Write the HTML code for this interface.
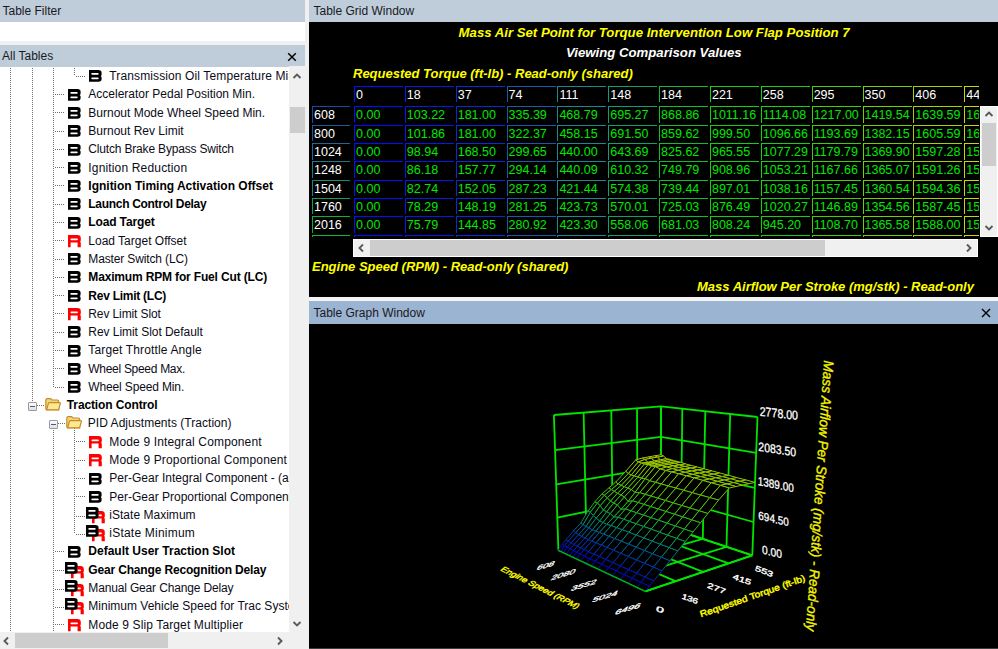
<!DOCTYPE html>
<html><head><meta charset="utf-8"><style>
*{margin:0;padding:0;box-sizing:border-box}
html,body{width:998px;height:649px;overflow:hidden;background:#f0f0f0;font-family:"Liberation Sans",sans-serif;font-size:12px;color:#000}
.abs{position:absolute}
.hdr{position:absolute;background:#bfcddb;color:#1a1a22;height:22px;line-height:23.4px;padding-left:2.5px;white-space:nowrap}
.hdr2{background:#9bb4d1}
.x{position:absolute;width:10px;height:10px}
#tree{position:absolute;left:0;top:67px;width:289px;height:565px;background:#fff;overflow:hidden}
#treein{position:absolute;left:0;top:-67px;width:289px;height:649px}
.vl{position:absolute;width:1px;background-image:linear-gradient(#6e6e6e 50%,transparent 50%);background-size:1px 2px}
.hl{position:absolute;height:1px;background-image:linear-gradient(90deg,#6e6e6e 50%,transparent 50%);background-size:2px 1px}
.ic{position:absolute;overflow:visible}
.xb{position:absolute;width:9px;height:9px;border:1px solid #9a9a9a;border-radius:1px;background:linear-gradient(#fcfcfc,#e0e0e0)}
.xb i{position:absolute;left:1.5px;top:3px;width:4.5px;height:1.2px;background:#3a5ab0}
.tt{position:absolute;white-space:nowrap;line-height:18.28px;height:18.28px;color:#0c0c18}
.tt.b{font-weight:bold;color:#000}
.sb{position:absolute;background:#f0f0f0}
.thumb{position:absolute;background:#cdcdcd}
.black{position:absolute;background:#000;overflow:hidden}
.ttl{position:absolute;font-weight:bold;font-style:italic;font-size:13px;white-space:nowrap;color:#ffff00;line-height:16px}
.gc{position:absolute;height:16.5px;width:49px;border-left:1.3px solid;border-top:1.3px solid;font-size:12.5px;line-height:16.2px;padding-left:1px;white-space:nowrap;overflow:hidden}
.gh{color:#fff}
.rl{color:#fff;width:38px}
.gd{color:#00e800}
</style></head><body>
<!-- left panel -->
<div class="hdr" style="left:0;top:0;width:305px">Table Filter</div>
<div class="abs" style="left:0;top:22px;width:305px;height:19px;background:#fff"></div>
<div class="hdr" style="left:0;top:45px;width:305px;height:22px;line-height:23.4px;padding-left:2px">All Tables</div>
<svg class="x" style="left:287px;top:51.5px" viewBox="0 0 10 10"><path d="M1.2 1.2L8.8 8.8M8.8 1.2L1.2 8.8" stroke="#000" stroke-width="1.5"/></svg>
<div id="tree"><div id="treein">
<div class="vl" style="left:10.0px;top:66px;height:566px"></div>
<div class="vl" style="left:31.5px;top:66px;height:334.84000000000003px"></div>
<div class="vl" style="left:52.5px;top:66px;height:321.06px"></div>
<div class="vl" style="left:52.5px;top:428.12000000000006px;height:203.87999999999994px"></div>
<div class="vl" style="left:73.5px;top:66px;height:10.299999999999997px"></div>
<div class="vl" style="left:73.5px;top:428.12000000000006px;height:105.1799999999999px"></div>
<div class="hl" style="left:76px;top:75.8px;width:10px"></div>
<svg class="ic" style="left:89px;top:70.39999999999999px" width="13" height="12" viewBox="0 0 13 12"><path d="M0 0H9.4Q12.6 0 12.6 2.8V4.4Q12.6 5.4 11.6 5.9Q12.6 6.4 12.6 7.4V9Q12.6 11.8 9.4 11.8H0Z" fill="#000"/><rect x="2.3" y="3.1" width="7.4" height="1.7" rx="0.8" fill="#fff"/><rect x="2.3" y="7.6" width="7.4" height="1.7" rx="0.8" fill="#fff"/></svg>
<div class="tt" style="left:109.3px;top:67.16px;letter-spacing:0.12px">Transmission Oil Temperature Min.</div>
<div class="hl" style="left:55px;top:94.08px;width:10px"></div>
<svg class="ic" style="left:68px;top:88.67999999999999px" width="13" height="12" viewBox="0 0 13 12"><path d="M0 0H9.4Q12.6 0 12.6 2.8V4.4Q12.6 5.4 11.6 5.9Q12.6 6.4 12.6 7.4V9Q12.6 11.8 9.4 11.8H0Z" fill="#000"/><rect x="2.3" y="3.1" width="7.4" height="1.7" rx="0.8" fill="#fff"/><rect x="2.3" y="7.6" width="7.4" height="1.7" rx="0.8" fill="#fff"/></svg>
<div class="tt" style="left:88.3px;top:85.44px">Accelerator Pedal Position Min.</div>
<div class="hl" style="left:55px;top:112.36px;width:10px"></div>
<svg class="ic" style="left:68px;top:106.96px" width="13" height="12" viewBox="0 0 13 12"><path d="M0 0H9.4Q12.6 0 12.6 2.8V4.4Q12.6 5.4 11.6 5.9Q12.6 6.4 12.6 7.4V9Q12.6 11.8 9.4 11.8H0Z" fill="#000"/><rect x="2.3" y="3.1" width="7.4" height="1.7" rx="0.8" fill="#fff"/><rect x="2.3" y="7.6" width="7.4" height="1.7" rx="0.8" fill="#fff"/></svg>
<div class="tt" style="left:88.3px;top:103.72px">Burnout Mode Wheel Speed Min.</div>
<div class="hl" style="left:55px;top:130.64px;width:10px"></div>
<svg class="ic" style="left:68px;top:125.23999999999998px" width="13" height="12" viewBox="0 0 13 12"><path d="M0 0H9.4Q12.6 0 12.6 2.8V4.4Q12.6 5.4 11.6 5.9Q12.6 6.4 12.6 7.4V9Q12.6 11.8 9.4 11.8H0Z" fill="#000"/><rect x="2.3" y="3.1" width="7.4" height="1.7" rx="0.8" fill="#fff"/><rect x="2.3" y="7.6" width="7.4" height="1.7" rx="0.8" fill="#fff"/></svg>
<div class="tt" style="left:88.3px;top:121.99999999999999px">Burnout Rev Limit</div>
<div class="hl" style="left:55px;top:148.92000000000002px;width:10px"></div>
<svg class="ic" style="left:68px;top:143.52px" width="13" height="12" viewBox="0 0 13 12"><path d="M0 0H9.4Q12.6 0 12.6 2.8V4.4Q12.6 5.4 11.6 5.9Q12.6 6.4 12.6 7.4V9Q12.6 11.8 9.4 11.8H0Z" fill="#000"/><rect x="2.3" y="3.1" width="7.4" height="1.7" rx="0.8" fill="#fff"/><rect x="2.3" y="7.6" width="7.4" height="1.7" rx="0.8" fill="#fff"/></svg>
<div class="tt" style="left:88.3px;top:140.28000000000003px;letter-spacing:-0.175px">Clutch Brake Bypass Switch</div>
<div class="hl" style="left:55px;top:167.2px;width:10px"></div>
<svg class="ic" style="left:68px;top:161.79999999999998px" width="13" height="12" viewBox="0 0 13 12"><path d="M0 0H9.4Q12.6 0 12.6 2.8V4.4Q12.6 5.4 11.6 5.9Q12.6 6.4 12.6 7.4V9Q12.6 11.8 9.4 11.8H0Z" fill="#000"/><rect x="2.3" y="3.1" width="7.4" height="1.7" rx="0.8" fill="#fff"/><rect x="2.3" y="7.6" width="7.4" height="1.7" rx="0.8" fill="#fff"/></svg>
<div class="tt" style="left:88.3px;top:158.56px;letter-spacing:0.163px">Ignition Reduction</div>
<div class="hl" style="left:55px;top:185.48000000000002px;width:10px"></div>
<svg class="ic" style="left:68px;top:180.08px" width="13" height="12" viewBox="0 0 13 12"><path d="M0 0H9.4Q12.6 0 12.6 2.8V4.4Q12.6 5.4 11.6 5.9Q12.6 6.4 12.6 7.4V9Q12.6 11.8 9.4 11.8H0Z" fill="#000"/><rect x="2.3" y="3.1" width="7.4" height="1.7" rx="0.8" fill="#fff"/><rect x="2.3" y="7.6" width="7.4" height="1.7" rx="0.8" fill="#fff"/></svg>
<div class="tt b" style="left:88.3px;top:176.84000000000003px">Ignition Timing Activation Offset</div>
<div class="hl" style="left:55px;top:203.76px;width:10px"></div>
<svg class="ic" style="left:68px;top:198.35999999999999px" width="13" height="12" viewBox="0 0 13 12"><path d="M0 0H9.4Q12.6 0 12.6 2.8V4.4Q12.6 5.4 11.6 5.9Q12.6 6.4 12.6 7.4V9Q12.6 11.8 9.4 11.8H0Z" fill="#000"/><rect x="2.3" y="3.1" width="7.4" height="1.7" rx="0.8" fill="#fff"/><rect x="2.3" y="7.6" width="7.4" height="1.7" rx="0.8" fill="#fff"/></svg>
<div class="tt b" style="left:88.3px;top:195.12px;letter-spacing:-0.301px">Launch Control Delay</div>
<div class="hl" style="left:55px;top:222.04000000000002px;width:10px"></div>
<svg class="ic" style="left:68px;top:216.64000000000001px" width="13" height="12" viewBox="0 0 13 12"><path d="M0 0H9.4Q12.6 0 12.6 2.8V4.4Q12.6 5.4 11.6 5.9Q12.6 6.4 12.6 7.4V9Q12.6 11.8 9.4 11.8H0Z" fill="#000"/><rect x="2.3" y="3.1" width="7.4" height="1.7" rx="0.8" fill="#fff"/><rect x="2.3" y="7.6" width="7.4" height="1.7" rx="0.8" fill="#fff"/></svg>
<div class="tt b" style="left:88.3px;top:213.40000000000003px;letter-spacing:-0.135px">Load Target</div>
<div class="hl" style="left:55px;top:240.32px;width:10px"></div>
<svg class="ic" style="left:68px;top:234.92px" width="13" height="13" viewBox="0 0 13 13"><path d="M0 0H9.4Q12.8 0 12.8 3.2V5.2Q12.8 6.4 12 6.8Q12.8 7.2 12.8 8.2V12.2H9.6V7.6H2.6V12.2H0Z" fill="#f00"/><rect x="2.5" y="3.4" width="7.4" height="1.8" rx="0.8" fill="#fff"/></svg>
<div class="tt" style="left:88.3px;top:231.68px">Load Target Offset</div>
<div class="hl" style="left:55px;top:258.6px;width:10px"></div>
<svg class="ic" style="left:68px;top:253.20000000000002px" width="13" height="12" viewBox="0 0 13 12"><path d="M0 0H9.4Q12.6 0 12.6 2.8V4.4Q12.6 5.4 11.6 5.9Q12.6 6.4 12.6 7.4V9Q12.6 11.8 9.4 11.8H0Z" fill="#000"/><rect x="2.3" y="3.1" width="7.4" height="1.7" rx="0.8" fill="#fff"/><rect x="2.3" y="7.6" width="7.4" height="1.7" rx="0.8" fill="#fff"/></svg>
<div class="tt" style="left:88.3px;top:249.96000000000004px;letter-spacing:-0.14px">Master Switch (LC)</div>
<div class="hl" style="left:55px;top:276.88px;width:10px"></div>
<svg class="ic" style="left:68px;top:271.48px" width="13" height="12" viewBox="0 0 13 12"><path d="M0 0H9.4Q12.6 0 12.6 2.8V4.4Q12.6 5.4 11.6 5.9Q12.6 6.4 12.6 7.4V9Q12.6 11.8 9.4 11.8H0Z" fill="#000"/><rect x="2.3" y="3.1" width="7.4" height="1.7" rx="0.8" fill="#fff"/><rect x="2.3" y="7.6" width="7.4" height="1.7" rx="0.8" fill="#fff"/></svg>
<div class="tt b" style="left:88.3px;top:268.24px;letter-spacing:-0.16px">Maximum RPM for Fuel Cut (LC)</div>
<div class="hl" style="left:55px;top:295.16px;width:10px"></div>
<svg class="ic" style="left:68px;top:289.76000000000005px" width="13" height="12" viewBox="0 0 13 12"><path d="M0 0H9.4Q12.6 0 12.6 2.8V4.4Q12.6 5.4 11.6 5.9Q12.6 6.4 12.6 7.4V9Q12.6 11.8 9.4 11.8H0Z" fill="#000"/><rect x="2.3" y="3.1" width="7.4" height="1.7" rx="0.8" fill="#fff"/><rect x="2.3" y="7.6" width="7.4" height="1.7" rx="0.8" fill="#fff"/></svg>
<div class="tt b" style="left:88.3px;top:286.52000000000004px;letter-spacing:-0.252px">Rev Limit (LC)</div>
<div class="hl" style="left:55px;top:313.44px;width:10px"></div>
<svg class="ic" style="left:68px;top:308.04px" width="13" height="13" viewBox="0 0 13 13"><path d="M0 0H9.4Q12.8 0 12.8 3.2V5.2Q12.8 6.4 12 6.8Q12.8 7.2 12.8 8.2V12.2H9.6V7.6H2.6V12.2H0Z" fill="#f00"/><rect x="2.5" y="3.4" width="7.4" height="1.8" rx="0.8" fill="#fff"/></svg>
<div class="tt" style="left:88.3px;top:304.8px;letter-spacing:-0.109px">Rev Limit Slot</div>
<div class="hl" style="left:55px;top:331.72px;width:10px"></div>
<svg class="ic" style="left:68px;top:326.32000000000005px" width="13" height="12" viewBox="0 0 13 12"><path d="M0 0H9.4Q12.6 0 12.6 2.8V4.4Q12.6 5.4 11.6 5.9Q12.6 6.4 12.6 7.4V9Q12.6 11.8 9.4 11.8H0Z" fill="#000"/><rect x="2.3" y="3.1" width="7.4" height="1.7" rx="0.8" fill="#fff"/><rect x="2.3" y="7.6" width="7.4" height="1.7" rx="0.8" fill="#fff"/></svg>
<div class="tt" style="left:88.3px;top:323.08000000000004px;letter-spacing:-0.044px">Rev Limit Slot Default</div>
<div class="hl" style="left:55px;top:350.00000000000006px;width:10px"></div>
<svg class="ic" style="left:68px;top:344.6000000000001px" width="13" height="12" viewBox="0 0 13 12"><path d="M0 0H9.4Q12.6 0 12.6 2.8V4.4Q12.6 5.4 11.6 5.9Q12.6 6.4 12.6 7.4V9Q12.6 11.8 9.4 11.8H0Z" fill="#000"/><rect x="2.3" y="3.1" width="7.4" height="1.7" rx="0.8" fill="#fff"/><rect x="2.3" y="7.6" width="7.4" height="1.7" rx="0.8" fill="#fff"/></svg>
<div class="tt" style="left:88.3px;top:341.36000000000007px;letter-spacing:0.143px">Target Throttle Angle</div>
<div class="hl" style="left:55px;top:368.28000000000003px;width:10px"></div>
<svg class="ic" style="left:68px;top:362.88000000000005px" width="13" height="12" viewBox="0 0 13 12"><path d="M0 0H9.4Q12.6 0 12.6 2.8V4.4Q12.6 5.4 11.6 5.9Q12.6 6.4 12.6 7.4V9Q12.6 11.8 9.4 11.8H0Z" fill="#000"/><rect x="2.3" y="3.1" width="7.4" height="1.7" rx="0.8" fill="#fff"/><rect x="2.3" y="7.6" width="7.4" height="1.7" rx="0.8" fill="#fff"/></svg>
<div class="tt" style="left:88.3px;top:359.64000000000004px;letter-spacing:-0.293px">Wheel Speed Max.</div>
<div class="hl" style="left:55px;top:386.56px;width:10px"></div>
<svg class="ic" style="left:68px;top:381.16px" width="13" height="12" viewBox="0 0 13 12"><path d="M0 0H9.4Q12.6 0 12.6 2.8V4.4Q12.6 5.4 11.6 5.9Q12.6 6.4 12.6 7.4V9Q12.6 11.8 9.4 11.8H0Z" fill="#000"/><rect x="2.3" y="3.1" width="7.4" height="1.7" rx="0.8" fill="#fff"/><rect x="2.3" y="7.6" width="7.4" height="1.7" rx="0.8" fill="#fff"/></svg>
<div class="tt" style="left:88.3px;top:377.92px;letter-spacing:-0.141px">Wheel Speed Min.</div>
<div class="xb" style="left:27.5px;top:401.54px"><i></i></div>
<div class="hl" style="left:37px;top:404.84000000000003px;width:8px"></div>
<svg class="ic" style="left:45px;top:398.14000000000004px" width="16" height="13" viewBox="0 0 16 13"><path d="M0.8 2.2Q0.8 0.6 2.4 0.6H5.6L7 2H12.4Q13.6 2 13.6 3.2V11.6H1.6Q0.8 11.6 0.8 10.8Z" fill="#f3d67a" stroke="#c48a2c" stroke-width="1.2"/><path d="M1.6 11.8L3.4 5.4Q3.7 4.6 4.6 4.6H14.6Q15.6 4.6 15.3 5.6L13.6 11.8Z" fill="#fde98f" stroke="#c48a2c" stroke-width="1.2"/></svg>
<div class="tt b" style="left:66.8px;top:396.20000000000005px;letter-spacing:-0.123px">Traction Control</div>
<div class="xb" style="left:48.5px;top:419.82000000000005px"><i></i></div>
<div class="hl" style="left:58px;top:423.12000000000006px;width:8px"></div>
<svg class="ic" style="left:66px;top:416.4200000000001px" width="16" height="13" viewBox="0 0 16 13"><path d="M0.8 2.2Q0.8 0.6 2.4 0.6H5.6L7 2H12.4Q13.6 2 13.6 3.2V11.6H1.6Q0.8 11.6 0.8 10.8Z" fill="#f3d67a" stroke="#c48a2c" stroke-width="1.2"/><path d="M1.6 11.8L3.4 5.4Q3.7 4.6 4.6 4.6H14.6Q15.6 4.6 15.3 5.6L13.6 11.8Z" fill="#fde98f" stroke="#c48a2c" stroke-width="1.2"/></svg>
<div class="tt" style="left:87.8px;top:414.4800000000001px;letter-spacing:0.031px">PID Adjustments (Traction)</div>
<div class="hl" style="left:76px;top:441.40000000000003px;width:10px"></div>
<svg class="ic" style="left:89px;top:436.00000000000006px" width="13" height="13" viewBox="0 0 13 13"><path d="M0 0H9.4Q12.8 0 12.8 3.2V5.2Q12.8 6.4 12 6.8Q12.8 7.2 12.8 8.2V12.2H9.6V7.6H2.6V12.2H0Z" fill="#f00"/><rect x="2.5" y="3.4" width="7.4" height="1.8" rx="0.8" fill="#fff"/></svg>
<div class="tt" style="left:109.3px;top:432.76000000000005px;letter-spacing:0.146px">Mode 9 Integral Component</div>
<div class="hl" style="left:76px;top:459.68px;width:10px"></div>
<svg class="ic" style="left:89px;top:454.28000000000003px" width="13" height="13" viewBox="0 0 13 13"><path d="M0 0H9.4Q12.8 0 12.8 3.2V5.2Q12.8 6.4 12 6.8Q12.8 7.2 12.8 8.2V12.2H9.6V7.6H2.6V12.2H0Z" fill="#f00"/><rect x="2.5" y="3.4" width="7.4" height="1.8" rx="0.8" fill="#fff"/></svg>
<div class="tt" style="left:109.3px;top:451.04px;letter-spacing:0.15px">Mode 9 Proportional Component</div>
<div class="hl" style="left:76px;top:477.96000000000004px;width:10px"></div>
<svg class="ic" style="left:89px;top:472.56000000000006px" width="13" height="12" viewBox="0 0 13 12"><path d="M0 0H9.4Q12.6 0 12.6 2.8V4.4Q12.6 5.4 11.6 5.9Q12.6 6.4 12.6 7.4V9Q12.6 11.8 9.4 11.8H0Z" fill="#000"/><rect x="2.3" y="3.1" width="7.4" height="1.7" rx="0.8" fill="#fff"/><rect x="2.3" y="7.6" width="7.4" height="1.7" rx="0.8" fill="#fff"/></svg>
<div class="tt" style="left:109.3px;top:469.32000000000005px">Per-Gear Integral Component - (all)</div>
<div class="hl" style="left:76px;top:496.24000000000007px;width:10px"></div>
<svg class="ic" style="left:89px;top:490.8400000000001px" width="13" height="12" viewBox="0 0 13 12"><path d="M0 0H9.4Q12.6 0 12.6 2.8V4.4Q12.6 5.4 11.6 5.9Q12.6 6.4 12.6 7.4V9Q12.6 11.8 9.4 11.8H0Z" fill="#000"/><rect x="2.3" y="3.1" width="7.4" height="1.7" rx="0.8" fill="#fff"/><rect x="2.3" y="7.6" width="7.4" height="1.7" rx="0.8" fill="#fff"/></svg>
<div class="tt" style="left:109.3px;top:487.6000000000001px">Per-Gear Proportional Component - (all)</div>
<div class="hl" style="left:76px;top:515.52px;width:10px"></div>
<svg class="ic" style="left:91.5px;top:511.02px" width="13" height="13" viewBox="0 0 13 13"><path d="M0 0H9.4Q12.8 0 12.8 3.2V5.2Q12.8 6.4 12 6.8Q12.8 7.2 12.8 8.2V12.2H9.6V7.6H2.6V12.2H0Z" fill="#f00"/><rect x="2.5" y="3.4" width="7.4" height="1.8" rx="0.8" fill="#fff"/></svg><svg class="ic" style="left:86px;top:506.82px" width="13" height="12" viewBox="0 0 13 12"><path d="M0 0H9.4Q12.6 0 12.6 2.8V4.4Q12.6 5.4 11.6 5.9Q12.6 6.4 12.6 7.4V9Q12.6 11.8 9.4 11.8H0Z" fill="#000"/><rect x="2.3" y="3.1" width="7.4" height="1.7" rx="0.8" fill="#fff"/><rect x="2.3" y="7.6" width="7.4" height="1.7" rx="0.8" fill="#fff"/></svg>
<div class="tt" style="left:109.3px;top:505.88px;letter-spacing:0.02px">iState Maximum</div>
<div class="hl" style="left:76px;top:533.8px;width:10px"></div>
<svg class="ic" style="left:91.5px;top:529.3px" width="13" height="13" viewBox="0 0 13 13"><path d="M0 0H9.4Q12.8 0 12.8 3.2V5.2Q12.8 6.4 12 6.8Q12.8 7.2 12.8 8.2V12.2H9.6V7.6H2.6V12.2H0Z" fill="#f00"/><rect x="2.5" y="3.4" width="7.4" height="1.8" rx="0.8" fill="#fff"/></svg><svg class="ic" style="left:86px;top:525.0999999999999px" width="13" height="12" viewBox="0 0 13 12"><path d="M0 0H9.4Q12.6 0 12.6 2.8V4.4Q12.6 5.4 11.6 5.9Q12.6 6.4 12.6 7.4V9Q12.6 11.8 9.4 11.8H0Z" fill="#000"/><rect x="2.3" y="3.1" width="7.4" height="1.7" rx="0.8" fill="#fff"/><rect x="2.3" y="7.6" width="7.4" height="1.7" rx="0.8" fill="#fff"/></svg>
<div class="tt" style="left:109.3px;top:524.16px;letter-spacing:0.215px">iState Minimum</div>
<div class="hl" style="left:55px;top:551.08px;width:10px"></div>
<svg class="ic" style="left:68px;top:545.6800000000001px" width="13" height="12" viewBox="0 0 13 12"><path d="M0 0H9.4Q12.6 0 12.6 2.8V4.4Q12.6 5.4 11.6 5.9Q12.6 6.4 12.6 7.4V9Q12.6 11.8 9.4 11.8H0Z" fill="#000"/><rect x="2.3" y="3.1" width="7.4" height="1.7" rx="0.8" fill="#fff"/><rect x="2.3" y="7.6" width="7.4" height="1.7" rx="0.8" fill="#fff"/></svg>
<div class="tt b" style="left:88.3px;top:542.44px">Default User Traction Slot</div>
<div class="hl" style="left:55px;top:570.36px;width:10px"></div>
<svg class="ic" style="left:70.5px;top:565.86px" width="13" height="13" viewBox="0 0 13 13"><path d="M0 0H9.4Q12.8 0 12.8 3.2V5.2Q12.8 6.4 12 6.8Q12.8 7.2 12.8 8.2V12.2H9.6V7.6H2.6V12.2H0Z" fill="#f00"/><rect x="2.5" y="3.4" width="7.4" height="1.8" rx="0.8" fill="#fff"/></svg><svg class="ic" style="left:65px;top:561.66px" width="13" height="12" viewBox="0 0 13 12"><path d="M0 0H9.4Q12.6 0 12.6 2.8V4.4Q12.6 5.4 11.6 5.9Q12.6 6.4 12.6 7.4V9Q12.6 11.8 9.4 11.8H0Z" fill="#000"/><rect x="2.3" y="3.1" width="7.4" height="1.7" rx="0.8" fill="#fff"/><rect x="2.3" y="7.6" width="7.4" height="1.7" rx="0.8" fill="#fff"/></svg>
<div class="tt b" style="left:88.3px;top:560.72px;letter-spacing:-0.162px">Gear Change Recognition Delay</div>
<div class="hl" style="left:55px;top:588.64px;width:10px"></div>
<svg class="ic" style="left:70.5px;top:584.14px" width="13" height="13" viewBox="0 0 13 13"><path d="M0 0H9.4Q12.8 0 12.8 3.2V5.2Q12.8 6.4 12 6.8Q12.8 7.2 12.8 8.2V12.2H9.6V7.6H2.6V12.2H0Z" fill="#f00"/><rect x="2.5" y="3.4" width="7.4" height="1.8" rx="0.8" fill="#fff"/></svg><svg class="ic" style="left:65px;top:579.9399999999999px" width="13" height="12" viewBox="0 0 13 12"><path d="M0 0H9.4Q12.6 0 12.6 2.8V4.4Q12.6 5.4 11.6 5.9Q12.6 6.4 12.6 7.4V9Q12.6 11.8 9.4 11.8H0Z" fill="#000"/><rect x="2.3" y="3.1" width="7.4" height="1.7" rx="0.8" fill="#fff"/><rect x="2.3" y="7.6" width="7.4" height="1.7" rx="0.8" fill="#fff"/></svg>
<div class="tt" style="left:88.3px;top:579.0px;letter-spacing:-0.156px">Manual Gear Change Delay</div>
<div class="hl" style="left:55px;top:606.92px;width:10px"></div>
<svg class="ic" style="left:70.5px;top:602.42px" width="13" height="13" viewBox="0 0 13 13"><path d="M0 0H9.4Q12.8 0 12.8 3.2V5.2Q12.8 6.4 12 6.8Q12.8 7.2 12.8 8.2V12.2H9.6V7.6H2.6V12.2H0Z" fill="#f00"/><rect x="2.5" y="3.4" width="7.4" height="1.8" rx="0.8" fill="#fff"/></svg><svg class="ic" style="left:65px;top:598.2199999999999px" width="13" height="12" viewBox="0 0 13 12"><path d="M0 0H9.4Q12.6 0 12.6 2.8V4.4Q12.6 5.4 11.6 5.9Q12.6 6.4 12.6 7.4V9Q12.6 11.8 9.4 11.8H0Z" fill="#000"/><rect x="2.3" y="3.1" width="7.4" height="1.7" rx="0.8" fill="#fff"/><rect x="2.3" y="7.6" width="7.4" height="1.7" rx="0.8" fill="#fff"/></svg>
<div class="tt" style="left:88.3px;top:597.28px">Minimum Vehicle Speed for Trac System</div>
<div class="hl" style="left:55px;top:624.2px;width:10px"></div>
<svg class="ic" style="left:68px;top:618.8000000000001px" width="13" height="13" viewBox="0 0 13 13"><path d="M0 0H9.4Q12.8 0 12.8 3.2V5.2Q12.8 6.4 12 6.8Q12.8 7.2 12.8 8.2V12.2H9.6V7.6H2.6V12.2H0Z" fill="#f00"/><rect x="2.5" y="3.4" width="7.4" height="1.8" rx="0.8" fill="#fff"/></svg>
<div class="tt" style="left:88.3px;top:615.5600000000001px;letter-spacing:0.124px">Mode 9 Slip Target Multiplier</div>
</div></div>
<!-- left vscroll -->
<div class="sb" style="left:289px;top:66px;width:16px;height:566px"></div>
<div class="thumb" style="left:290px;top:107px;width:15px;height:26px"></div>
<svg class="abs" style="left:292px;top:72px" width="10" height="8" viewBox="0 0 10 8"><path d="M1.5 6L5 2.5L8.5 6" fill="none" stroke="#5a5a5a" stroke-width="1.9"/></svg>
<svg class="abs" style="left:292px;top:619.7px" width="10" height="8" viewBox="0 0 10 8"><path d="M1.5 2L5 5.5L8.5 2" fill="none" stroke="#5a5a5a" stroke-width="1.9"/></svg>
<!-- left hscroll -->
<div class="sb" style="left:0;top:632px;width:289px;height:17px"></div>
<div class="thumb" style="left:15px;top:633px;width:153px;height:15px"></div>
<svg class="abs" style="left:2px;top:636px" width="8" height="10" viewBox="0 0 8 10"><path d="M6 1.5L2.5 5L6 8.5" fill="none" stroke="#5a5a5a" stroke-width="1.9"/></svg>
<svg class="abs" style="left:276px;top:636px" width="8" height="10" viewBox="0 0 8 10"><path d="M2 1.5L5.5 5L2 8.5" fill="none" stroke="#5a5a5a" stroke-width="1.9"/></svg>

<!-- right: grid window -->
<div class="hdr" style="left:309px;top:0;width:689px;padding-left:4.5px">Table Grid Window</div>
<div class="black" style="left:309px;top:22px;width:689px;height:275px">
 <div class="abs" style="left:-309px;top:-22px;width:998px;height:297px">
  <div class="ttl" style="left:458.6px;top:25.2px;font-size:13.2px">Mass Air Set Point for Torque Intervention Low Flap Position 7</div>
  <div class="ttl" style="left:566px;top:45px;color:#fff;font-size:13.2px">Viewing Comparison Values</div>
  <div class="ttl" style="left:353px;top:65.5px">Requested Torque (ft-lb) - Read-only (shared)</div>
  <div class="abs" style="left:0;top:0;width:979px;height:237px;overflow:hidden">
<div class="gc gh" style="left:354.0px;top:85.9px;border-color:#0010ff">0</div>
<div class="gc gh" style="left:404.85px;top:85.9px;border-color:#0818e8">18</div>
<div class="gc gh" style="left:455.7px;top:85.9px;border-color:#0a2ad4">37</div>
<div class="gc gh" style="left:506.55px;top:85.9px;border-color:#1a58a8">74</div>
<div class="gc gh" style="left:557.4px;top:85.9px;border-color:#1a8890">111</div>
<div class="gc gh" style="left:608.25px;top:85.9px;border-color:#10a070">148</div>
<div class="gc gh" style="left:659.1px;top:85.9px;border-color:#10bc34">184</div>
<div class="gc gh" style="left:709.95px;top:85.9px;border-color:#10d010">221</div>
<div class="gc gh" style="left:760.8px;top:85.9px;border-color:#18d010">258</div>
<div class="gc gh" style="left:811.6500000000001px;top:85.9px;border-color:#40d000">295</div>
<div class="gc gh" style="left:862.5px;top:85.9px;border-color:#70d000">350</div>
<div class="gc gh" style="left:913.35px;top:85.9px;border-color:#a8d000">406</div>
<div class="gc gh" style="left:964.2px;top:85.9px;border-color:#c8d800">443</div>
<div class="gc rl" style="left:312px;top:106.4px;border-color:#1a4aa8">608</div>
<div class="gc gd" style="left:354.0px;top:106.4px;border-color:#0010ff">0.00</div>
<div class="gc gd" style="left:404.85px;top:106.4px;border-color:#0818e8">103.22</div>
<div class="gc gd" style="left:455.7px;top:106.4px;border-color:#0a2ad4">181.00</div>
<div class="gc gd" style="left:506.55px;top:106.4px;border-color:#1a58a8">335.39</div>
<div class="gc gd" style="left:557.4px;top:106.4px;border-color:#1a8890">468.79</div>
<div class="gc gd" style="left:608.25px;top:106.4px;border-color:#10a070">695.27</div>
<div class="gc gd" style="left:659.1px;top:106.4px;border-color:#10bc34">868.86</div>
<div class="gc gd" style="left:709.95px;top:106.4px;border-color:#10d010">1011.16</div>
<div class="gc gd" style="left:760.8px;top:106.4px;border-color:#18d010">1114.08</div>
<div class="gc gd" style="left:811.6500000000001px;top:106.4px;border-color:#40d000">1217.00</div>
<div class="gc gd" style="left:862.5px;top:106.4px;border-color:#70d000">1419.54</div>
<div class="gc gd" style="left:913.35px;top:106.4px;border-color:#a8d000">1639.59</div>
<div class="gc gd" style="left:964.2px;top:106.4px;border-color:#c8d800">1684.00</div>
<div class="gc rl" style="left:312px;top:124.7px;border-color:#1a58a0">800</div>
<div class="gc gd" style="left:354.0px;top:124.7px;border-color:#0010ff">0.00</div>
<div class="gc gd" style="left:404.85px;top:124.7px;border-color:#0818e8">101.86</div>
<div class="gc gd" style="left:455.7px;top:124.7px;border-color:#0a2ad4">181.00</div>
<div class="gc gd" style="left:506.55px;top:124.7px;border-color:#1a58a8">322.37</div>
<div class="gc gd" style="left:557.4px;top:124.7px;border-color:#1a8890">458.15</div>
<div class="gc gd" style="left:608.25px;top:124.7px;border-color:#10a070">691.50</div>
<div class="gc gd" style="left:659.1px;top:124.7px;border-color:#10bc34">859.62</div>
<div class="gc gd" style="left:709.95px;top:124.7px;border-color:#10d010">999.50</div>
<div class="gc gd" style="left:760.8px;top:124.7px;border-color:#18d010">1096.66</div>
<div class="gc gd" style="left:811.6500000000001px;top:124.7px;border-color:#40d000">1193.69</div>
<div class="gc gd" style="left:862.5px;top:124.7px;border-color:#70d000">1382.15</div>
<div class="gc gd" style="left:913.35px;top:124.7px;border-color:#a8d000">1605.59</div>
<div class="gc gd" style="left:964.2px;top:124.7px;border-color:#c8d800">1650.00</div>
<div class="gc rl" style="left:312px;top:143.0px;border-color:#1a6898">1024</div>
<div class="gc gd" style="left:354.0px;top:143.0px;border-color:#0010ff">0.00</div>
<div class="gc gd" style="left:404.85px;top:143.0px;border-color:#0818e8">98.94</div>
<div class="gc gd" style="left:455.7px;top:143.0px;border-color:#0a2ad4">168.50</div>
<div class="gc gd" style="left:506.55px;top:143.0px;border-color:#1a58a8">299.65</div>
<div class="gc gd" style="left:557.4px;top:143.0px;border-color:#1a8890">440.00</div>
<div class="gc gd" style="left:608.25px;top:143.0px;border-color:#10a070">643.69</div>
<div class="gc gd" style="left:659.1px;top:143.0px;border-color:#10bc34">825.62</div>
<div class="gc gd" style="left:709.95px;top:143.0px;border-color:#10d010">965.55</div>
<div class="gc gd" style="left:760.8px;top:143.0px;border-color:#18d010">1077.29</div>
<div class="gc gd" style="left:811.6500000000001px;top:143.0px;border-color:#40d000">1179.79</div>
<div class="gc gd" style="left:862.5px;top:143.0px;border-color:#70d000">1369.90</div>
<div class="gc gd" style="left:913.35px;top:143.0px;border-color:#a8d000">1597.28</div>
<div class="gc gd" style="left:964.2px;top:143.0px;border-color:#c8d800">1590.00</div>
<div class="gc rl" style="left:312px;top:161.3px;border-color:#1a7a88">1248</div>
<div class="gc gd" style="left:354.0px;top:161.3px;border-color:#0010ff">0.00</div>
<div class="gc gd" style="left:404.85px;top:161.3px;border-color:#0818e8">86.18</div>
<div class="gc gd" style="left:455.7px;top:161.3px;border-color:#0a2ad4">157.77</div>
<div class="gc gd" style="left:506.55px;top:161.3px;border-color:#1a58a8">294.14</div>
<div class="gc gd" style="left:557.4px;top:161.3px;border-color:#1a8890">440.09</div>
<div class="gc gd" style="left:608.25px;top:161.3px;border-color:#10a070">610.32</div>
<div class="gc gd" style="left:659.1px;top:161.3px;border-color:#10bc34">749.79</div>
<div class="gc gd" style="left:709.95px;top:161.3px;border-color:#10d010">908.96</div>
<div class="gc gd" style="left:760.8px;top:161.3px;border-color:#18d010">1053.21</div>
<div class="gc gd" style="left:811.6500000000001px;top:161.3px;border-color:#40d000">1167.66</div>
<div class="gc gd" style="left:862.5px;top:161.3px;border-color:#70d000">1365.07</div>
<div class="gc gd" style="left:913.35px;top:161.3px;border-color:#a8d000">1591.26</div>
<div class="gc gd" style="left:964.2px;top:161.3px;border-color:#c8d800">1590.00</div>
<div class="gc rl" style="left:312px;top:179.60000000000002px;border-color:#1a8870">1504</div>
<div class="gc gd" style="left:354.0px;top:179.60000000000002px;border-color:#0010ff">0.00</div>
<div class="gc gd" style="left:404.85px;top:179.60000000000002px;border-color:#0818e8">82.74</div>
<div class="gc gd" style="left:455.7px;top:179.60000000000002px;border-color:#0a2ad4">152.05</div>
<div class="gc gd" style="left:506.55px;top:179.60000000000002px;border-color:#1a58a8">287.23</div>
<div class="gc gd" style="left:557.4px;top:179.60000000000002px;border-color:#1a8890">421.44</div>
<div class="gc gd" style="left:608.25px;top:179.60000000000002px;border-color:#10a070">574.38</div>
<div class="gc gd" style="left:659.1px;top:179.60000000000002px;border-color:#10bc34">739.44</div>
<div class="gc gd" style="left:709.95px;top:179.60000000000002px;border-color:#10d010">897.01</div>
<div class="gc gd" style="left:760.8px;top:179.60000000000002px;border-color:#18d010">1038.16</div>
<div class="gc gd" style="left:811.6500000000001px;top:179.60000000000002px;border-color:#40d000">1157.45</div>
<div class="gc gd" style="left:862.5px;top:179.60000000000002px;border-color:#70d000">1360.54</div>
<div class="gc gd" style="left:913.35px;top:179.60000000000002px;border-color:#a8d000">1594.36</div>
<div class="gc gd" style="left:964.2px;top:179.60000000000002px;border-color:#c8d800">1590.00</div>
<div class="gc rl" style="left:312px;top:197.9px;border-color:#10a050">1760</div>
<div class="gc gd" style="left:354.0px;top:197.9px;border-color:#0010ff">0.00</div>
<div class="gc gd" style="left:404.85px;top:197.9px;border-color:#0818e8">78.29</div>
<div class="gc gd" style="left:455.7px;top:197.9px;border-color:#0a2ad4">148.19</div>
<div class="gc gd" style="left:506.55px;top:197.9px;border-color:#1a58a8">281.25</div>
<div class="gc gd" style="left:557.4px;top:197.9px;border-color:#1a8890">423.73</div>
<div class="gc gd" style="left:608.25px;top:197.9px;border-color:#10a070">570.01</div>
<div class="gc gd" style="left:659.1px;top:197.9px;border-color:#10bc34">725.03</div>
<div class="gc gd" style="left:709.95px;top:197.9px;border-color:#10d010">876.49</div>
<div class="gc gd" style="left:760.8px;top:197.9px;border-color:#18d010">1020.27</div>
<div class="gc gd" style="left:811.6500000000001px;top:197.9px;border-color:#40d000">1146.89</div>
<div class="gc gd" style="left:862.5px;top:197.9px;border-color:#70d000">1354.56</div>
<div class="gc gd" style="left:913.35px;top:197.9px;border-color:#a8d000">1587.45</div>
<div class="gc gd" style="left:964.2px;top:197.9px;border-color:#c8d800">1590.00</div>
<div class="gc rl" style="left:312px;top:216.20000000000002px;border-color:#10b030">2016</div>
<div class="gc gd" style="left:354.0px;top:216.20000000000002px;border-color:#0010ff">0.00</div>
<div class="gc gd" style="left:404.85px;top:216.20000000000002px;border-color:#0818e8">75.79</div>
<div class="gc gd" style="left:455.7px;top:216.20000000000002px;border-color:#0a2ad4">144.85</div>
<div class="gc gd" style="left:506.55px;top:216.20000000000002px;border-color:#1a58a8">280.92</div>
<div class="gc gd" style="left:557.4px;top:216.20000000000002px;border-color:#1a8890">423.30</div>
<div class="gc gd" style="left:608.25px;top:216.20000000000002px;border-color:#10a070">558.06</div>
<div class="gc gd" style="left:659.1px;top:216.20000000000002px;border-color:#10bc34">681.03</div>
<div class="gc gd" style="left:709.95px;top:216.20000000000002px;border-color:#10d010">808.24</div>
<div class="gc gd" style="left:760.8px;top:216.20000000000002px;border-color:#18d010">945.20</div>
<div class="gc gd" style="left:811.6500000000001px;top:216.20000000000002px;border-color:#40d000">1108.70</div>
<div class="gc gd" style="left:862.5px;top:216.20000000000002px;border-color:#70d000">1365.58</div>
<div class="gc gd" style="left:913.35px;top:216.20000000000002px;border-color:#a8d000">1588.00</div>
<div class="gc gd" style="left:964.2px;top:216.20000000000002px;border-color:#c8d800">1590.00</div>
<div class="gc rl" style="left:312px;top:234.5px;border-color:#10b830">2272</div>
<div class="gc gd" style="left:354.0px;top:234.5px;border-color:#0010ff">0.00</div>
<div class="gc gd" style="left:404.85px;top:234.5px;border-color:#0818e8">70.00</div>
<div class="gc gd" style="left:455.7px;top:234.5px;border-color:#0a2ad4">140.00</div>
<div class="gc gd" style="left:506.55px;top:234.5px;border-color:#1a58a8">270.00</div>
<div class="gc gd" style="left:557.4px;top:234.5px;border-color:#1a8890">410.00</div>
<div class="gc gd" style="left:608.25px;top:234.5px;border-color:#10a070">540.00</div>
<div class="gc gd" style="left:659.1px;top:234.5px;border-color:#10bc34">660.00</div>
<div class="gc gd" style="left:709.95px;top:234.5px;border-color:#10d010">790.00</div>
<div class="gc gd" style="left:760.8px;top:234.5px;border-color:#18d010">930.00</div>
<div class="gc gd" style="left:811.6500000000001px;top:234.5px;border-color:#40d000">1090.00</div>
<div class="gc gd" style="left:862.5px;top:234.5px;border-color:#70d000">1350.00</div>
<div class="gc gd" style="left:913.35px;top:234.5px;border-color:#a8d000">1580.00</div>
<div class="gc gd" style="left:964.2px;top:234.5px;border-color:#c8d800">1590.00</div>
  </div>
  <!-- grid hscroll -->
  <div class="abs" style="left:353px;top:239px;width:625px;height:18px;background:#f0f0f0;border:1px solid #fff"></div>
  <div class="thumb" style="left:370px;top:240px;width:455px;height:16px"></div>
  <svg class="abs" style="left:357px;top:243px" width="8" height="10" viewBox="0 0 8 10"><path d="M6 1.5L2.5 5L6 8.5" fill="none" stroke="#5a5a5a" stroke-width="1.9"/></svg>
  <svg class="abs" style="left:965px;top:243px" width="8" height="10" viewBox="0 0 8 10"><path d="M2 1.5L5.5 5L2 8.5" fill="none" stroke="#5a5a5a" stroke-width="1.9"/></svg>
  <!-- grid vscroll -->
  <div class="abs" style="left:980px;top:106px;width:18px;height:131px;background:#f0f0f0;border:1px solid #fff"></div>
  <div class="thumb" style="left:982px;top:123px;width:14px;height:43px"></div>
  <svg class="abs" style="left:984px;top:110px" width="10" height="8" viewBox="0 0 10 8"><path d="M1.5 6L5 2.5L8.5 6" fill="none" stroke="#5a5a5a" stroke-width="1.9"/></svg>
  <svg class="abs" style="left:984px;top:224px" width="10" height="8" viewBox="0 0 10 8"><path d="M1.5 2L5 5.5L8.5 2" fill="none" stroke="#5a5a5a" stroke-width="1.9"/></svg>
  <div class="ttl" style="left:312px;top:259px">Engine Speed (RPM) - Read-only (shared)</div>
  <div class="ttl" style="left:697px;top:279px">Mass Airflow Per Stroke (mg/stk) - Read-only</div>
 </div>
</div>
<div class="abs" style="left:309px;top:297px;width:689px;height:4px;background:#f4f4f4"></div>
<!-- graph window -->
<div class="hdr hdr2" style="left:309px;top:301px;width:689px;height:23px;line-height:24.4px;padding-left:4.5px">Table Graph Window</div>
<svg class="x" style="left:981px;top:308px" viewBox="0 0 10 10"><path d="M1 1L9 9M9 1L1 9" stroke="#000" stroke-width="1.4"/></svg>
<div class="abs" style="left:309px;top:648px;width:689px;height:1px;background:#3c3c3c"></div>
<div class="black" style="left:309px;top:324px;width:689px;height:324px">
<svg style="position:absolute;left:-309px;top:-324px" width="998" height="649" viewBox="0 0 998 649">
<line x1="558.4" y1="550.3" x2="553.9" y2="415.0" stroke="#00e400" stroke-width="1.8"/>
<line x1="558.4" y1="550.3" x2="660.6" y2="524.8" stroke="#00e400" stroke-width="1.8"/>
<line x1="660.6" y1="524.8" x2="661.1" y2="406.4" stroke="#00e400" stroke-width="1.8"/>
<line x1="660.6" y1="524.8" x2="752.3" y2="555.3" stroke="#00e400" stroke-width="1.8"/>
<line x1="558.4" y1="550.3" x2="660.6" y2="524.8" stroke="#00e400" stroke-width="1.8"/>
<line x1="558.4" y1="550.3" x2="645.4" y2="591.3" stroke="#00e400" stroke-width="1.8"/>
<line x1="586.6" y1="543.2" x2="583.6" y2="412.6" stroke="#00e400" stroke-width="1.8"/>
<line x1="557.3" y1="517.7" x2="660.7" y2="496.1" stroke="#00e400" stroke-width="1.8"/>
<line x1="680.9" y1="531.6" x2="682.3" y2="408.7" stroke="#00e400" stroke-width="1.8"/>
<line x1="660.7" y1="496.1" x2="753.5" y2="522.0" stroke="#00e400" stroke-width="1.8"/>
<line x1="577.2" y1="559.2" x2="680.9" y2="531.6" stroke="#00e400" stroke-width="1.8"/>
<line x1="586.6" y1="543.2" x2="675.5" y2="581.2" stroke="#00e400" stroke-width="1.8"/>
<line x1="612.9" y1="536.7" x2="611.3" y2="410.4" stroke="#00e400" stroke-width="1.8"/>
<line x1="556.2" y1="484.3" x2="660.8" y2="466.8" stroke="#00e400" stroke-width="1.8"/>
<line x1="702.8" y1="538.9" x2="705.3" y2="411.3" stroke="#00e400" stroke-width="1.8"/>
<line x1="660.8" y1="466.8" x2="754.8" y2="487.9" stroke="#00e400" stroke-width="1.8"/>
<line x1="597.9" y1="568.9" x2="702.8" y2="538.9" stroke="#00e400" stroke-width="1.8"/>
<line x1="612.9" y1="536.7" x2="703.1" y2="571.9" stroke="#00e400" stroke-width="1.8"/>
<line x1="637.5" y1="530.5" x2="637.0" y2="408.3" stroke="#00e400" stroke-width="1.8"/>
<line x1="555.0" y1="450.1" x2="660.9" y2="436.9" stroke="#00e400" stroke-width="1.8"/>
<line x1="726.5" y1="546.8" x2="730.2" y2="414.0" stroke="#00e400" stroke-width="1.8"/>
<line x1="660.9" y1="436.9" x2="756.1" y2="452.9" stroke="#00e400" stroke-width="1.8"/>
<line x1="620.5" y1="579.6" x2="726.5" y2="546.8" stroke="#00e400" stroke-width="1.8"/>
<line x1="637.5" y1="530.5" x2="728.6" y2="563.3" stroke="#00e400" stroke-width="1.8"/>
<line x1="660.6" y1="524.8" x2="661.1" y2="406.4" stroke="#00e400" stroke-width="1.8"/>
<line x1="553.9" y1="415.0" x2="661.1" y2="406.4" stroke="#00e400" stroke-width="1.8"/>
<line x1="752.3" y1="555.3" x2="757.5" y2="417.0" stroke="#00e400" stroke-width="1.8"/>
<line x1="661.1" y1="406.4" x2="757.5" y2="417.0" stroke="#00e400" stroke-width="1.8"/>
<line x1="645.4" y1="591.3" x2="752.3" y2="555.3" stroke="#00e400" stroke-width="1.8"/>
<line x1="660.6" y1="524.8" x2="752.3" y2="555.3" stroke="#00e400" stroke-width="1.8"/>
<polygon points="654.7,455.8 657.3,457.2 663.5,456.1 660.9,454.8" fill="#000" stroke="#aac800" stroke-width="1" stroke-linejoin="round"/>
<polygon points="657.3,457.2 660.4,459.8 666.6,458.6 663.5,456.1" fill="#000" stroke="#a5c800" stroke-width="1" stroke-linejoin="round"/>
<polygon points="648.6,456.9 651.2,458.2 657.3,457.2 654.7,455.8" fill="#000" stroke="#aac800" stroke-width="1" stroke-linejoin="round"/>
<polygon points="660.4,459.8 663.5,460.6 669.7,459.4 666.6,458.6" fill="#000" stroke="#a1c800" stroke-width="1" stroke-linejoin="round"/>
<polygon points="651.2,458.2 654.3,460.9 660.4,459.8 657.3,457.2" fill="#000" stroke="#a5c800" stroke-width="1" stroke-linejoin="round"/>
<polygon points="663.5,460.6 667.1,461.5 673.3,460.4 669.7,459.4" fill="#000" stroke="#a0c800" stroke-width="1" stroke-linejoin="round"/>
<polygon points="642.2,458.1 644.8,459.5 651.2,458.2 648.6,456.9" fill="#000" stroke="#aac800" stroke-width="1" stroke-linejoin="round"/>
<polygon points="654.3,460.9 657.4,461.7 663.5,460.6 660.4,459.8" fill="#000" stroke="#a0c800" stroke-width="1" stroke-linejoin="round"/>
<polygon points="644.8,459.5 647.9,462.4 654.3,460.9 651.2,458.2" fill="#000" stroke="#a4c800" stroke-width="1" stroke-linejoin="round"/>
<polygon points="667.1,461.5 670.8,462.5 677.0,461.4 673.3,460.4" fill="#000" stroke="#9fc800" stroke-width="1" stroke-linejoin="round"/>
<polygon points="657.4,461.7 661.0,462.6 667.1,461.5 663.5,460.6" fill="#000" stroke="#9fc800" stroke-width="1" stroke-linejoin="round"/>
<polygon points="635.7,459.9 638.3,462.0 644.8,459.5 642.2,458.1" fill="#000" stroke="#a7c800" stroke-width="1" stroke-linejoin="round"/>
<polygon points="647.9,462.4 651.0,463.1 657.4,461.7 654.3,460.9" fill="#000" stroke="#9fc800" stroke-width="1" stroke-linejoin="round"/>
<polygon points="670.8,462.5 674.5,463.4 680.7,462.3 677.0,461.4" fill="#000" stroke="#9ec800" stroke-width="1" stroke-linejoin="round"/>
<polygon points="638.3,462.0 641.3,463.1 647.9,462.4 644.8,459.5" fill="#000" stroke="#a1c800" stroke-width="1" stroke-linejoin="round"/>
<polygon points="661.0,462.6 664.6,463.6 670.8,462.5 667.1,461.5" fill="#000" stroke="#9fc800" stroke-width="1" stroke-linejoin="round"/>
<polygon points="651.0,463.1 654.6,463.9 661.0,462.6 657.4,461.7" fill="#000" stroke="#9ec800" stroke-width="1" stroke-linejoin="round"/>
<polygon points="625.7,471.3 628.3,473.6 638.3,462.0 635.7,459.9" fill="#000" stroke="#8fc800" stroke-width="1" stroke-linejoin="round"/>
<polygon points="641.3,463.1 644.4,464.1 651.0,463.1 647.9,462.4" fill="#000" stroke="#9ec800" stroke-width="1" stroke-linejoin="round"/>
<polygon points="674.5,463.4 679.2,464.9 685.4,463.9 680.7,462.3" fill="#000" stroke="#9dc800" stroke-width="1" stroke-linejoin="round"/>
<polygon points="664.6,463.6 668.3,464.4 674.5,463.4 670.8,462.5" fill="#000" stroke="#9ec800" stroke-width="1" stroke-linejoin="round"/>
<polygon points="628.3,473.6 631.3,475.0 641.3,463.1 638.3,462.0" fill="#000" stroke="#8ac800" stroke-width="1" stroke-linejoin="round"/>
<polygon points="654.6,463.9 658.2,464.9 664.6,463.6 661.0,462.6" fill="#000" stroke="#9ec800" stroke-width="1" stroke-linejoin="round"/>
<polygon points="644.4,464.1 648.0,464.7 654.6,463.9 651.0,463.1" fill="#000" stroke="#9ec800" stroke-width="1" stroke-linejoin="round"/>
<polygon points="615.7,482.1 618.2,483.9 628.3,473.6 625.7,471.3" fill="#000" stroke="#66c800" stroke-width="1" stroke-linejoin="round"/>
<polygon points="668.3,464.4 673.0,465.9 679.2,464.9 674.5,463.4" fill="#000" stroke="#9dc800" stroke-width="1" stroke-linejoin="round"/>
<polygon points="631.3,475.0 634.4,476.0 644.4,464.1 641.3,463.1" fill="#000" stroke="#89c800" stroke-width="1" stroke-linejoin="round"/>
<polygon points="679.2,464.9 685.0,466.5 691.2,465.4 685.4,463.9" fill="#000" stroke="#9bc800" stroke-width="1" stroke-linejoin="round"/>
<polygon points="658.2,464.9 661.9,465.7 668.3,464.4 664.6,463.6" fill="#000" stroke="#9dc800" stroke-width="1" stroke-linejoin="round"/>
<polygon points="648.0,464.7 651.7,465.9 658.2,464.9 654.6,463.9" fill="#000" stroke="#9ec800" stroke-width="1" stroke-linejoin="round"/>
<polygon points="618.2,483.9 621.2,485.4 631.3,475.0 628.3,473.6" fill="#000" stroke="#62c800" stroke-width="1" stroke-linejoin="round"/>
<polygon points="634.4,476.0 637.9,477.1 648.0,464.7 644.4,464.1" fill="#000" stroke="#88c800" stroke-width="1" stroke-linejoin="round"/>
<polygon points="608.8,488.0 611.3,489.6 618.2,483.9 615.7,482.1" fill="#000" stroke="#4ec406" stroke-width="1" stroke-linejoin="round"/>
<polygon points="661.9,465.7 666.6,467.0 673.0,465.9 668.3,464.4" fill="#000" stroke="#9dc800" stroke-width="1" stroke-linejoin="round"/>
<polygon points="673.0,465.9 678.8,467.5 685.0,466.5 679.2,464.9" fill="#000" stroke="#9bc800" stroke-width="1" stroke-linejoin="round"/>
<polygon points="621.2,485.4 624.3,486.8 634.4,476.0 631.3,475.0" fill="#000" stroke="#60c800" stroke-width="1" stroke-linejoin="round"/>
<polygon points="651.7,465.9 655.3,466.7 661.9,465.7 658.2,464.9" fill="#000" stroke="#9dc800" stroke-width="1" stroke-linejoin="round"/>
<polygon points="685.0,466.5 690.9,468.1 697.1,467.0 691.2,465.4" fill="#000" stroke="#9ac800" stroke-width="1" stroke-linejoin="round"/>
<polygon points="637.9,477.1 641.5,478.3 651.7,465.9 648.0,464.7" fill="#000" stroke="#87c800" stroke-width="1" stroke-linejoin="round"/>
<polygon points="611.3,489.6 614.3,491.3 621.2,485.4 618.2,483.9" fill="#000" stroke="#4cc307" stroke-width="1" stroke-linejoin="round"/>
<polygon points="601.8,494.0 604.3,495.3 611.3,489.6 608.8,488.0" fill="#000" stroke="#41bf0e" stroke-width="1" stroke-linejoin="round"/>
<polygon points="624.3,486.8 627.8,488.2 637.9,477.1 634.4,476.0" fill="#000" stroke="#5ec800" stroke-width="1" stroke-linejoin="round"/>
<polygon points="655.3,466.7 660.0,469.0 666.6,467.0 661.9,465.7" fill="#000" stroke="#9cc800" stroke-width="1" stroke-linejoin="round"/>
<polygon points="666.6,467.0 672.3,468.6 678.8,467.5 673.0,465.9" fill="#000" stroke="#9bc800" stroke-width="1" stroke-linejoin="round"/>
<polygon points="614.3,491.3 617.4,493.3 624.3,486.8 621.2,485.4" fill="#000" stroke="#4ac209" stroke-width="1" stroke-linejoin="round"/>
<polygon points="678.8,467.5 684.7,469.2 690.9,468.1 685.0,466.5" fill="#000" stroke="#9ac800" stroke-width="1" stroke-linejoin="round"/>
<polygon points="641.5,478.3 645.2,478.7 655.3,466.7 651.7,465.9" fill="#000" stroke="#87c800" stroke-width="1" stroke-linejoin="round"/>
<polygon points="604.3,495.3 607.3,497.8 614.3,491.3 611.3,489.6" fill="#000" stroke="#3ebe0f" stroke-width="1" stroke-linejoin="round"/>
<polygon points="690.9,468.1 697.9,470.0 704.1,468.8 697.1,467.0" fill="#000" stroke="#98c800" stroke-width="1" stroke-linejoin="round"/>
<polygon points="594.8,501.9 597.3,503.1 604.3,495.3 601.8,494.0" fill="#000" stroke="#31ba17" stroke-width="1" stroke-linejoin="round"/>
<polygon points="627.8,488.2 631.4,489.7 641.5,478.3 637.9,477.1" fill="#000" stroke="#5dc800" stroke-width="1" stroke-linejoin="round"/>
<polygon points="617.4,493.3 620.9,495.1 627.8,488.2 624.3,486.8" fill="#000" stroke="#48c20a" stroke-width="1" stroke-linejoin="round"/>
<polygon points="607.3,497.8 610.4,501.3 617.4,493.3 614.3,491.3" fill="#000" stroke="#3abd12" stroke-width="1" stroke-linejoin="round"/>
<polygon points="660.0,469.0 665.7,470.5 672.3,468.6 666.6,467.0" fill="#000" stroke="#99c800" stroke-width="1" stroke-linejoin="round"/>
<polygon points="645.2,478.7 649.8,480.8 660.0,469.0 655.3,466.7" fill="#000" stroke="#86c800" stroke-width="1" stroke-linejoin="round"/>
<polygon points="597.3,503.1 600.2,505.7 607.3,497.8 604.3,495.3" fill="#000" stroke="#2eb919" stroke-width="1" stroke-linejoin="round"/>
<polygon points="672.3,468.6 678.2,470.3 684.7,469.2 678.8,467.5" fill="#000" stroke="#9ac800" stroke-width="1" stroke-linejoin="round"/>
<polygon points="587.8,511.3 590.3,512.3 597.3,503.1 594.8,501.9" fill="#000" stroke="#1cb126" stroke-width="1" stroke-linejoin="round"/>
<polygon points="631.4,489.7 635.0,492.5 645.2,478.7 641.5,478.3" fill="#000" stroke="#5bc800" stroke-width="1" stroke-linejoin="round"/>
<polygon points="684.7,469.2 691.7,471.1 697.9,470.0 690.9,468.1" fill="#000" stroke="#98c800" stroke-width="1" stroke-linejoin="round"/>
<polygon points="620.9,495.1 624.4,496.9 631.4,489.7 627.8,488.2" fill="#000" stroke="#46c10b" stroke-width="1" stroke-linejoin="round"/>
<polygon points="610.4,501.3 613.8,503.0 620.9,495.1 617.4,493.3" fill="#000" stroke="#36bc14" stroke-width="1" stroke-linejoin="round"/>
<polygon points="600.2,505.7 603.3,510.2 610.4,501.3 607.3,497.8" fill="#000" stroke="#27b71d" stroke-width="1" stroke-linejoin="round"/>
<polygon points="697.9,470.0 705.6,472.1 711.9,470.9 704.1,468.8" fill="#000" stroke="#96c800" stroke-width="1" stroke-linejoin="round"/>
<polygon points="590.3,512.3 593.3,515.6 600.2,505.7 597.3,503.1" fill="#000" stroke="#19ad2d" stroke-width="1" stroke-linejoin="round"/>
<polygon points="580.7,523.2 583.1,524.7 590.3,512.3 587.8,511.3" fill="#000" stroke="#058f5f" stroke-width="1" stroke-linejoin="round"/>
<polygon points="649.8,480.8 655.5,482.4 665.7,470.5 660.0,469.0" fill="#000" stroke="#83c800" stroke-width="1" stroke-linejoin="round"/>
<polygon points="665.7,470.5 671.6,472.0 678.2,470.3 672.3,468.6" fill="#000" stroke="#98c800" stroke-width="1" stroke-linejoin="round"/>
<polygon points="635.0,492.5 639.6,492.7 649.8,480.8 645.2,478.7" fill="#000" stroke="#5ac800" stroke-width="1" stroke-linejoin="round"/>
<polygon points="624.4,496.9 628.0,501.5 635.0,492.5 631.4,489.7" fill="#000" stroke="#41bf0e" stroke-width="1" stroke-linejoin="round"/>
<polygon points="613.8,503.0 617.4,505.1 624.4,496.9 620.9,495.1" fill="#000" stroke="#34bb15" stroke-width="1" stroke-linejoin="round"/>
<polygon points="603.3,510.2 606.7,511.8 613.8,503.0 610.4,501.3" fill="#000" stroke="#22b520" stroke-width="1" stroke-linejoin="round"/>
<polygon points="678.2,470.3 685.2,472.3 691.7,471.1 684.7,469.2" fill="#000" stroke="#98c800" stroke-width="1" stroke-linejoin="round"/>
<polygon points="593.3,515.6 596.2,518.2 603.3,510.2 600.2,505.7" fill="#000" stroke="#14a53b" stroke-width="1" stroke-linejoin="round"/>
<polygon points="583.1,524.7 586.0,526.6 593.3,515.6 590.3,512.3" fill="#000" stroke="#038c65" stroke-width="1" stroke-linejoin="round"/>
<polygon points="573.3,531.1 575.7,532.7 583.1,524.7 580.7,523.2" fill="#000" stroke="#006189" stroke-width="1" stroke-linejoin="round"/>
<polygon points="691.7,471.1 699.4,473.2 705.6,472.1 697.9,470.0" fill="#000" stroke="#96c800" stroke-width="1" stroke-linejoin="round"/>
<polygon points="617.4,505.1 621.0,509.4 628.0,501.5 624.4,496.9" fill="#000" stroke="#2eb919" stroke-width="1" stroke-linejoin="round"/>
<polygon points="596.2,518.2 599.7,521.1 606.7,511.8 603.3,510.2" fill="#000" stroke="#0f9e46" stroke-width="1" stroke-linejoin="round"/>
<polygon points="606.7,511.8 610.2,513.7 617.4,505.1 613.8,503.0" fill="#000" stroke="#20b421" stroke-width="1" stroke-linejoin="round"/>
<polygon points="628.0,501.5 632.6,500.8 639.6,492.7 635.0,492.5" fill="#000" stroke="#40bf0f" stroke-width="1" stroke-linejoin="round"/>
<polygon points="586.0,526.6 588.9,527.8 596.2,518.2 593.3,515.6" fill="#000" stroke="#00876c" stroke-width="1" stroke-linejoin="round"/>
<polygon points="705.6,472.1 713.5,474.2 719.8,473.0 711.9,470.9" fill="#000" stroke="#95c800" stroke-width="1" stroke-linejoin="round"/>
<polygon points="575.7,532.7 578.6,534.9 586.0,526.6 583.1,524.7" fill="#000" stroke="#005c8c" stroke-width="1" stroke-linejoin="round"/>
<polygon points="655.5,482.4 661.3,484.0 671.6,472.0 665.7,470.5" fill="#000" stroke="#82c800" stroke-width="1" stroke-linejoin="round"/>
<polygon points="639.6,492.7 645.2,494.4 655.5,482.4 649.8,480.8" fill="#000" stroke="#5ac800" stroke-width="1" stroke-linejoin="round"/>
<polygon points="565.9,540.0 568.3,541.0 575.7,532.7 573.3,531.1" fill="#000" stroke="#0039a5" stroke-width="1" stroke-linejoin="round"/>
<polygon points="671.6,472.0 678.6,473.8 685.2,472.3 678.2,470.3" fill="#000" stroke="#97c800" stroke-width="1" stroke-linejoin="round"/>
<polygon points="685.2,472.3 692.9,474.4 699.4,473.2 691.7,471.1" fill="#000" stroke="#96c800" stroke-width="1" stroke-linejoin="round"/>
<polygon points="610.2,513.7 613.8,517.0 621.0,509.4 617.4,505.1" fill="#000" stroke="#1bb028" stroke-width="1" stroke-linejoin="round"/>
<polygon points="588.9,527.8 592.3,530.0 599.7,521.1 596.2,518.2" fill="#000" stroke="#008271" stroke-width="1" stroke-linejoin="round"/>
<polygon points="599.7,521.1 603.1,522.6 610.2,513.7 606.7,511.8" fill="#000" stroke="#0e9c4a" stroke-width="1" stroke-linejoin="round"/>
<polygon points="578.6,534.9 581.5,536.4 588.9,527.8 586.0,526.6" fill="#000" stroke="#00598f" stroke-width="1" stroke-linejoin="round"/>
<polygon points="621.0,509.4 625.5,509.0 632.6,500.8 628.0,501.5" fill="#000" stroke="#2cb81a" stroke-width="1" stroke-linejoin="round"/>
<polygon points="562.0,544.5 564.4,545.7 568.3,541.0 565.9,540.0" fill="#000" stroke="#0020b0" stroke-width="1" stroke-linejoin="round"/>
<polygon points="568.3,541.0 571.1,542.9 578.6,534.9 575.7,532.7" fill="#000" stroke="#0037a7" stroke-width="1" stroke-linejoin="round"/>
<polygon points="699.4,473.2 707.3,475.4 713.5,474.2 705.6,472.1" fill="#000" stroke="#95c800" stroke-width="1" stroke-linejoin="round"/>
<polygon points="632.6,500.8 638.2,502.6 645.2,494.4 639.6,492.7" fill="#000" stroke="#42c00d" stroke-width="1" stroke-linejoin="round"/>
<polygon points="558.4,550.3 560.7,551.4 564.4,545.7 562.0,544.5" fill="#000" stroke="#000bb9" stroke-width="1" stroke-linejoin="round"/>
<polygon points="645.2,494.4 651.0,496.1 661.3,484.0 655.5,482.4" fill="#000" stroke="#59c700" stroke-width="1" stroke-linejoin="round"/>
<polygon points="661.3,484.0 668.2,486.0 678.6,473.8 671.6,472.0" fill="#000" stroke="#82c800" stroke-width="1" stroke-linejoin="round"/>
<polygon points="592.3,530.0 595.8,531.2 603.1,522.6 599.7,521.1" fill="#000" stroke="#007e74" stroke-width="1" stroke-linejoin="round"/>
<polygon points="603.1,522.6 606.7,524.4 613.8,517.0 610.2,513.7" fill="#000" stroke="#0b9850" stroke-width="1" stroke-linejoin="round"/>
<polygon points="581.5,536.4 584.9,538.1 592.3,530.0 588.9,527.8" fill="#000" stroke="#005790" stroke-width="1" stroke-linejoin="round"/>
<polygon points="564.4,545.7 567.2,547.1 571.1,542.9 568.3,541.0" fill="#000" stroke="#001fb0" stroke-width="1" stroke-linejoin="round"/>
<polygon points="713.5,474.2 722.2,476.6 728.5,475.3 719.8,473.0" fill="#000" stroke="#93c800" stroke-width="1" stroke-linejoin="round"/>
<polygon points="571.1,542.9 574.0,544.6 581.5,536.4 578.6,534.9" fill="#000" stroke="#0034a8" stroke-width="1" stroke-linejoin="round"/>
<polygon points="613.8,517.0 618.2,517.3 625.5,509.0 621.0,509.4" fill="#000" stroke="#1aae2b" stroke-width="1" stroke-linejoin="round"/>
<polygon points="678.6,473.8 686.2,475.8 692.9,474.4 685.2,472.3" fill="#000" stroke="#96c800" stroke-width="1" stroke-linejoin="round"/>
<polygon points="560.7,551.4 563.5,552.7 567.2,547.1 564.4,545.7" fill="#000" stroke="#000bb9" stroke-width="1" stroke-linejoin="round"/>
<polygon points="625.5,509.0 631.0,510.9 638.2,502.6 632.6,500.8" fill="#000" stroke="#2fb918" stroke-width="1" stroke-linejoin="round"/>
<polygon points="692.9,474.4 700.8,476.6 707.3,475.4 699.4,473.2" fill="#000" stroke="#95c800" stroke-width="1" stroke-linejoin="round"/>
<polygon points="567.2,547.1 570.1,549.0 574.0,544.6 571.1,542.9" fill="#000" stroke="#001db1" stroke-width="1" stroke-linejoin="round"/>
<polygon points="595.8,531.2 599.3,532.6 606.7,524.4 603.1,522.6" fill="#000" stroke="#007d75" stroke-width="1" stroke-linejoin="round"/>
<polygon points="584.9,538.1 588.3,539.8 595.8,531.2 592.3,530.0" fill="#000" stroke="#005592" stroke-width="1" stroke-linejoin="round"/>
<polygon points="638.2,502.6 643.9,504.4 651.0,496.1 645.2,494.4" fill="#000" stroke="#41bf0e" stroke-width="1" stroke-linejoin="round"/>
<polygon points="574.0,544.6 577.3,546.4 584.9,538.1 581.5,536.4" fill="#000" stroke="#0032a8" stroke-width="1" stroke-linejoin="round"/>
<polygon points="606.7,524.4 611.1,525.6 618.2,517.3 613.8,517.0" fill="#000" stroke="#0b9851" stroke-width="1" stroke-linejoin="round"/>
<polygon points="563.5,552.7 566.4,554.0 570.1,549.0 567.2,547.1" fill="#000" stroke="#000ab9" stroke-width="1" stroke-linejoin="round"/>
<polygon points="651.0,496.1 657.8,498.2 668.2,486.0 661.3,484.0" fill="#000" stroke="#59c700" stroke-width="1" stroke-linejoin="round"/>
<polygon points="707.3,475.4 716.0,477.8 722.2,476.6 713.5,474.2" fill="#000" stroke="#93c800" stroke-width="1" stroke-linejoin="round"/>
<polygon points="618.2,517.3 623.8,519.3 631.0,510.9 625.5,509.0" fill="#000" stroke="#1cb127" stroke-width="1" stroke-linejoin="round"/>
<polygon points="668.2,486.0 675.8,488.1 686.2,475.8 678.6,473.8" fill="#000" stroke="#81c800" stroke-width="1" stroke-linejoin="round"/>
<polygon points="570.1,549.0 573.4,550.7 577.3,546.4 574.0,544.6" fill="#000" stroke="#001bb2" stroke-width="1" stroke-linejoin="round"/>
<polygon points="588.3,539.8 591.8,541.3 599.3,532.6 595.8,531.2" fill="#000" stroke="#005592" stroke-width="1" stroke-linejoin="round"/>
<polygon points="577.3,546.4 580.7,548.0 588.3,539.8 584.9,538.1" fill="#000" stroke="#0031a9" stroke-width="1" stroke-linejoin="round"/>
<polygon points="722.2,476.6 730.6,478.8 736.9,477.6 728.5,475.3" fill="#000" stroke="#91c800" stroke-width="1" stroke-linejoin="round"/>
<polygon points="631.0,510.9 636.7,512.8 643.9,504.4 638.2,502.6" fill="#000" stroke="#2eb919" stroke-width="1" stroke-linejoin="round"/>
<polygon points="599.3,532.6 603.7,534.2 611.1,525.6 606.7,524.4" fill="#000" stroke="#007d75" stroke-width="1" stroke-linejoin="round"/>
<polygon points="686.2,475.8 694.1,477.9 700.8,476.6 692.9,474.4" fill="#000" stroke="#94c800" stroke-width="1" stroke-linejoin="round"/>
<polygon points="566.4,554.0 569.7,555.6 573.4,550.7 570.1,549.0" fill="#000" stroke="#0009ba" stroke-width="1" stroke-linejoin="round"/>
<polygon points="611.1,525.6 616.6,527.7 623.8,519.3 618.2,517.3" fill="#000" stroke="#0c994e" stroke-width="1" stroke-linejoin="round"/>
<polygon points="643.9,504.4 650.7,506.6 657.8,498.2 651.0,496.1" fill="#000" stroke="#41bf0e" stroke-width="1" stroke-linejoin="round"/>
<polygon points="700.8,476.6 709.5,479.1 716.0,477.8 707.3,475.4" fill="#000" stroke="#93c800" stroke-width="1" stroke-linejoin="round"/>
<polygon points="573.4,550.7 576.8,552.4 580.7,548.0 577.3,546.4" fill="#000" stroke="#001ab3" stroke-width="1" stroke-linejoin="round"/>
<polygon points="580.7,548.0 584.1,549.7 591.8,541.3 588.3,539.8" fill="#000" stroke="#0030a9" stroke-width="1" stroke-linejoin="round"/>
<polygon points="623.8,519.3 629.4,521.4 636.7,512.8 631.0,510.9" fill="#000" stroke="#1cb127" stroke-width="1" stroke-linejoin="round"/>
<polygon points="591.8,541.3 596.1,542.9 603.7,534.2 599.3,532.6" fill="#000" stroke="#005592" stroke-width="1" stroke-linejoin="round"/>
<polygon points="657.8,498.2 665.4,500.5 675.8,488.1 668.2,486.0" fill="#000" stroke="#58c700" stroke-width="1" stroke-linejoin="round"/>
<polygon points="569.7,555.6 573.0,557.2 576.8,552.4 573.4,550.7" fill="#000" stroke="#0009ba" stroke-width="1" stroke-linejoin="round"/>
<polygon points="716.0,477.8 724.4,480.1 730.6,478.8 722.2,476.6" fill="#000" stroke="#91c800" stroke-width="1" stroke-linejoin="round"/>
<polygon points="603.7,534.2 609.1,536.4 616.6,527.7 611.1,525.6" fill="#000" stroke="#007e74" stroke-width="1" stroke-linejoin="round"/>
<polygon points="675.8,488.1 683.7,490.3 694.1,477.9 686.2,475.8" fill="#000" stroke="#80c800" stroke-width="1" stroke-linejoin="round"/>
<polygon points="636.7,512.8 643.5,515.1 650.7,506.6 643.9,504.4" fill="#000" stroke="#2eb919" stroke-width="1" stroke-linejoin="round"/>
<polygon points="576.8,552.4 580.2,554.1 584.1,549.7 580.7,548.0" fill="#000" stroke="#0019b3" stroke-width="1" stroke-linejoin="round"/>
<polygon points="730.6,478.8 739.8,481.3 746.1,480.0 736.9,477.6" fill="#000" stroke="#8fc800" stroke-width="1" stroke-linejoin="round"/>
<polygon points="616.6,527.7 622.2,529.8 629.4,521.4 623.8,519.3" fill="#000" stroke="#0c994f" stroke-width="1" stroke-linejoin="round"/>
<polygon points="694.1,477.9 702.8,480.4 709.5,479.1 700.8,476.6" fill="#000" stroke="#93c800" stroke-width="1" stroke-linejoin="round"/>
<polygon points="584.1,549.7 588.5,551.8 596.1,542.9 591.8,541.3" fill="#000" stroke="#0030a9" stroke-width="1" stroke-linejoin="round"/>
<polygon points="573.0,557.2 576.4,558.8 580.2,554.1 576.8,552.4" fill="#000" stroke="#0008ba" stroke-width="1" stroke-linejoin="round"/>
<polygon points="650.7,506.6 658.2,509.0 665.4,500.5 657.8,498.2" fill="#000" stroke="#41bf0e" stroke-width="1" stroke-linejoin="round"/>
<polygon points="596.1,542.9 601.5,545.2 609.1,536.4 603.7,534.2" fill="#000" stroke="#005592" stroke-width="1" stroke-linejoin="round"/>
<polygon points="709.5,479.1 717.8,481.4 724.4,480.1 716.0,477.8" fill="#000" stroke="#91c800" stroke-width="1" stroke-linejoin="round"/>
<polygon points="629.4,521.4 636.1,523.8 643.5,515.1 636.7,512.8" fill="#000" stroke="#1bb028" stroke-width="1" stroke-linejoin="round"/>
<polygon points="580.2,554.1 584.5,556.4 588.5,551.8 584.1,549.7" fill="#000" stroke="#0018b3" stroke-width="1" stroke-linejoin="round"/>
<polygon points="609.1,536.4 614.7,538.6 622.2,529.8 616.6,527.7" fill="#000" stroke="#007d74" stroke-width="1" stroke-linejoin="round"/>
<polygon points="665.4,500.5 673.2,502.9 683.7,490.3 675.8,488.1" fill="#000" stroke="#58c700" stroke-width="1" stroke-linejoin="round"/>
<polygon points="724.4,480.1 733.6,482.6 739.8,481.3 730.6,478.8" fill="#000" stroke="#8fc800" stroke-width="1" stroke-linejoin="round"/>
<polygon points="576.4,558.8 580.7,560.8 584.5,556.4 580.2,554.1" fill="#000" stroke="#0008ba" stroke-width="1" stroke-linejoin="round"/>
<polygon points="643.5,515.1 650.9,517.7 658.2,509.0 650.7,506.6" fill="#000" stroke="#2eb919" stroke-width="1" stroke-linejoin="round"/>
<polygon points="683.7,490.3 692.3,492.7 702.8,480.4 694.1,477.9" fill="#000" stroke="#7fc800" stroke-width="1" stroke-linejoin="round"/>
<polygon points="588.5,551.8 593.8,554.2 601.5,545.2 596.1,542.9" fill="#000" stroke="#0030a9" stroke-width="1" stroke-linejoin="round"/>
<polygon points="622.2,529.8 628.9,532.3 636.1,523.8 629.4,521.4" fill="#000" stroke="#0c994f" stroke-width="1" stroke-linejoin="round"/>
<polygon points="739.8,481.3 748.7,483.7 755.0,482.4 746.1,480.0" fill="#000" stroke="#8dc800" stroke-width="1" stroke-linejoin="round"/>
<polygon points="702.8,480.4 711.2,482.8 717.8,481.4 709.5,479.1" fill="#000" stroke="#91c800" stroke-width="1" stroke-linejoin="round"/>
<polygon points="601.5,545.2 607.0,547.5 614.7,538.6 609.1,536.4" fill="#000" stroke="#005592" stroke-width="1" stroke-linejoin="round"/>
<polygon points="584.5,556.4 589.8,558.8 593.8,554.2 588.5,551.8" fill="#000" stroke="#0017b4" stroke-width="1" stroke-linejoin="round"/>
<polygon points="658.2,509.0 666.0,511.5 673.2,502.9 665.4,500.5" fill="#000" stroke="#40bf0e" stroke-width="1" stroke-linejoin="round"/>
<polygon points="636.1,523.8 643.6,526.5 650.9,517.7 643.5,515.1" fill="#000" stroke="#1bb028" stroke-width="1" stroke-linejoin="round"/>
<polygon points="717.8,481.4 727.0,484.0 733.6,482.6 724.4,480.1" fill="#000" stroke="#8fc800" stroke-width="1" stroke-linejoin="round"/>
<polygon points="614.7,538.6 621.3,541.3 628.9,532.3 622.2,529.8" fill="#000" stroke="#007d74" stroke-width="1" stroke-linejoin="round"/>
<polygon points="580.7,560.8 586.0,563.3 589.8,558.8 584.5,556.4" fill="#000" stroke="#0007ba" stroke-width="1" stroke-linejoin="round"/>
<polygon points="673.2,502.9 681.7,505.5 692.3,492.7 683.7,490.3" fill="#000" stroke="#57c701" stroke-width="1" stroke-linejoin="round"/>
<polygon points="593.8,554.2 599.3,556.6 607.0,547.5 601.5,545.2" fill="#000" stroke="#0030a9" stroke-width="1" stroke-linejoin="round"/>
<polygon points="733.6,482.6 742.5,485.1 748.7,483.7 739.8,481.3" fill="#000" stroke="#8dc800" stroke-width="1" stroke-linejoin="round"/>
<polygon points="650.9,517.7 658.6,520.3 666.0,511.5 658.2,509.0" fill="#000" stroke="#2db919" stroke-width="1" stroke-linejoin="round"/>
<polygon points="692.3,492.7 700.6,495.1 711.2,482.8 702.8,480.4" fill="#000" stroke="#7dc800" stroke-width="1" stroke-linejoin="round"/>
<polygon points="628.9,532.3 636.2,535.1 643.6,526.5 636.1,523.8" fill="#000" stroke="#0b9850" stroke-width="1" stroke-linejoin="round"/>
<polygon points="607.0,547.5 613.6,550.3 621.3,541.3 614.7,538.6" fill="#000" stroke="#005592" stroke-width="1" stroke-linejoin="round"/>
<polygon points="589.8,558.8 595.2,561.3 599.3,556.6 593.8,554.2" fill="#000" stroke="#0017b4" stroke-width="1" stroke-linejoin="round"/>
<polygon points="711.2,482.8 720.4,485.4 727.0,484.0 717.8,481.4" fill="#000" stroke="#8fc800" stroke-width="1" stroke-linejoin="round"/>
<polygon points="666.0,511.5 674.5,514.3 681.7,505.5 673.2,502.9" fill="#000" stroke="#40bf0e" stroke-width="1" stroke-linejoin="round"/>
<polygon points="586.0,563.3 591.4,565.8 595.2,561.3 589.8,558.8" fill="#000" stroke="#0007ba" stroke-width="1" stroke-linejoin="round"/>
<polygon points="643.6,526.5 651.2,529.2 658.6,520.3 650.9,517.7" fill="#000" stroke="#1bb029" stroke-width="1" stroke-linejoin="round"/>
<polygon points="621.3,541.3 628.6,544.2 636.2,535.1 628.9,532.3" fill="#000" stroke="#007d75" stroke-width="1" stroke-linejoin="round"/>
<polygon points="727.0,484.0 735.9,486.5 742.5,485.1 733.6,482.6" fill="#000" stroke="#8dc800" stroke-width="1" stroke-linejoin="round"/>
<polygon points="599.3,556.6 605.8,559.5 613.6,550.3 607.0,547.5" fill="#000" stroke="#0030a9" stroke-width="1" stroke-linejoin="round"/>
<polygon points="681.7,505.5 690.0,508.0 700.6,495.1 692.3,492.7" fill="#000" stroke="#57c701" stroke-width="1" stroke-linejoin="round"/>
<polygon points="658.6,520.3 667.1,523.2 674.5,514.3 666.0,511.5" fill="#000" stroke="#2db919" stroke-width="1" stroke-linejoin="round"/>
<polygon points="636.2,535.1 643.8,538.0 651.2,529.2 643.6,526.5" fill="#000" stroke="#0b9850" stroke-width="1" stroke-linejoin="round"/>
<polygon points="700.6,495.1 709.8,497.6 720.4,485.4 711.2,482.8" fill="#000" stroke="#7cc800" stroke-width="1" stroke-linejoin="round"/>
<polygon points="595.2,561.3 601.7,564.3 605.8,559.5 599.3,556.6" fill="#000" stroke="#0017b4" stroke-width="1" stroke-linejoin="round"/>
<polygon points="613.6,550.3 620.9,553.4 628.6,544.2 621.3,541.3" fill="#000" stroke="#005592" stroke-width="1" stroke-linejoin="round"/>
<polygon points="720.4,485.4 729.2,488.0 735.9,486.5 727.0,484.0" fill="#000" stroke="#8dc800" stroke-width="1" stroke-linejoin="round"/>
<polygon points="591.4,565.8 597.9,568.9 601.7,564.3 595.2,561.3" fill="#000" stroke="#0007ba" stroke-width="1" stroke-linejoin="round"/>
<polygon points="674.5,514.3 682.7,516.9 690.0,508.0 681.7,505.5" fill="#000" stroke="#40bf0f" stroke-width="1" stroke-linejoin="round"/>
<polygon points="651.2,529.2 659.6,532.3 667.1,523.2 658.6,520.3" fill="#000" stroke="#1baf2a" stroke-width="1" stroke-linejoin="round"/>
<polygon points="628.6,544.2 636.2,547.2 643.8,538.0 636.2,535.1" fill="#000" stroke="#007c75" stroke-width="1" stroke-linejoin="round"/>
<polygon points="605.8,559.5 613.0,562.8 620.9,553.4 613.6,550.3" fill="#000" stroke="#0030a9" stroke-width="1" stroke-linejoin="round"/>
<polygon points="690.0,508.0 699.1,510.8 709.8,497.6 700.6,495.1" fill="#000" stroke="#56c601" stroke-width="1" stroke-linejoin="round"/>
<polygon points="667.1,523.2 675.3,526.0 682.7,516.9 674.5,514.3" fill="#000" stroke="#2db91a" stroke-width="1" stroke-linejoin="round"/>
<polygon points="601.7,564.3 608.9,567.6 613.0,562.8 605.8,559.5" fill="#000" stroke="#0017b4" stroke-width="1" stroke-linejoin="round"/>
<polygon points="643.8,538.0 652.2,541.2 659.6,532.3 651.2,529.2" fill="#000" stroke="#0b9851" stroke-width="1" stroke-linejoin="round"/>
<polygon points="709.8,497.6 718.6,500.1 729.2,488.0 720.4,485.4" fill="#000" stroke="#7bc800" stroke-width="1" stroke-linejoin="round"/>
<polygon points="620.9,553.4 628.4,556.6 636.2,547.2 628.6,544.2" fill="#000" stroke="#005492" stroke-width="1" stroke-linejoin="round"/>
<polygon points="597.9,568.9 605.0,572.3 608.9,567.6 601.7,564.3" fill="#000" stroke="#0007ba" stroke-width="1" stroke-linejoin="round"/>
<polygon points="682.7,516.9 691.7,519.9 699.1,510.8 690.0,508.0" fill="#000" stroke="#3fbf0f" stroke-width="1" stroke-linejoin="round"/>
<polygon points="659.6,532.3 667.7,535.2 675.3,526.0 667.1,523.2" fill="#000" stroke="#1aaf2a" stroke-width="1" stroke-linejoin="round"/>
<polygon points="636.2,547.2 644.5,550.6 652.2,541.2 643.8,538.0" fill="#000" stroke="#007c75" stroke-width="1" stroke-linejoin="round"/>
<polygon points="613.0,562.8 620.4,566.1 628.4,556.6 620.9,553.4" fill="#000" stroke="#002faa" stroke-width="1" stroke-linejoin="round"/>
<polygon points="699.1,510.8 707.9,513.5 718.6,500.1 709.8,497.6" fill="#000" stroke="#56c602" stroke-width="1" stroke-linejoin="round"/>
<polygon points="608.9,567.6 616.3,571.0 620.4,566.1 613.0,562.8" fill="#000" stroke="#0017b4" stroke-width="1" stroke-linejoin="round"/>
<polygon points="675.3,526.0 684.3,529.1 691.7,519.9 682.7,516.9" fill="#000" stroke="#2cb81a" stroke-width="1" stroke-linejoin="round"/>
<polygon points="652.2,541.2 660.3,544.3 667.7,535.2 659.6,532.3" fill="#000" stroke="#0b9751" stroke-width="1" stroke-linejoin="round"/>
<polygon points="628.4,556.6 636.6,560.1 644.5,550.6 636.2,547.2" fill="#000" stroke="#005492" stroke-width="1" stroke-linejoin="round"/>
<polygon points="605.0,572.3 612.4,575.7 616.3,571.0 608.9,567.6" fill="#000" stroke="#0007ba" stroke-width="1" stroke-linejoin="round"/>
<polygon points="691.7,519.9 700.5,522.7 707.9,513.5 699.1,510.8" fill="#000" stroke="#3fbf0f" stroke-width="1" stroke-linejoin="round"/>
<polygon points="667.7,535.2 676.7,538.4 684.3,529.1 675.3,526.0" fill="#000" stroke="#1aaf2b" stroke-width="1" stroke-linejoin="round"/>
<polygon points="644.5,550.6 652.5,553.8 660.3,544.3 652.2,541.2" fill="#000" stroke="#007b76" stroke-width="1" stroke-linejoin="round"/>
<polygon points="620.4,566.1 628.6,569.7 636.6,560.1 628.4,556.6" fill="#000" stroke="#002faa" stroke-width="1" stroke-linejoin="round"/>
<polygon points="616.3,571.0 624.4,574.8 628.6,569.7 620.4,566.1" fill="#000" stroke="#0017b4" stroke-width="1" stroke-linejoin="round"/>
<polygon points="684.3,529.1 693.0,532.0 700.5,522.7 691.7,519.9" fill="#000" stroke="#2cb81a" stroke-width="1" stroke-linejoin="round"/>
<polygon points="660.3,544.3 669.2,547.7 676.7,538.4 667.7,535.2" fill="#000" stroke="#0b9752" stroke-width="1" stroke-linejoin="round"/>
<polygon points="636.6,560.1 644.6,563.4 652.5,553.8 644.5,550.6" fill="#000" stroke="#005493" stroke-width="1" stroke-linejoin="round"/>
<polygon points="612.4,575.7 620.5,579.6 624.4,574.8 616.3,571.0" fill="#000" stroke="#0007ba" stroke-width="1" stroke-linejoin="round"/>
<polygon points="676.7,538.4 685.3,541.5 693.0,532.0 684.3,529.1" fill="#000" stroke="#1aae2b" stroke-width="1" stroke-linejoin="round"/>
<polygon points="652.5,553.8 661.3,557.3 669.2,547.7 660.3,544.3" fill="#000" stroke="#007b76" stroke-width="1" stroke-linejoin="round"/>
<polygon points="628.6,569.7 636.5,573.3 644.6,563.4 636.6,560.1" fill="#000" stroke="#002faa" stroke-width="1" stroke-linejoin="round"/>
<polygon points="624.4,574.8 632.3,578.4 636.5,573.3 628.6,569.7" fill="#000" stroke="#0017b4" stroke-width="1" stroke-linejoin="round"/>
<polygon points="669.2,547.7 677.8,550.9 685.3,541.5 676.7,538.4" fill="#000" stroke="#0a9752" stroke-width="1" stroke-linejoin="round"/>
<polygon points="644.6,563.4 653.4,567.2 661.3,557.3 652.5,553.8" fill="#000" stroke="#005393" stroke-width="1" stroke-linejoin="round"/>
<polygon points="620.5,579.6 628.3,583.3 632.3,578.4 624.4,574.8" fill="#000" stroke="#0007ba" stroke-width="1" stroke-linejoin="round"/>
<polygon points="661.3,557.3 669.9,560.8 677.8,550.9 669.2,547.7" fill="#000" stroke="#007b76" stroke-width="1" stroke-linejoin="round"/>
<polygon points="636.5,573.3 645.2,577.2 653.4,567.2 644.6,563.4" fill="#000" stroke="#002faa" stroke-width="1" stroke-linejoin="round"/>
<polygon points="632.3,578.4 641.0,582.4 645.2,577.2 636.5,573.3" fill="#000" stroke="#0017b4" stroke-width="1" stroke-linejoin="round"/>
<polygon points="653.4,567.2 661.9,570.8 669.9,560.8 661.3,557.3" fill="#000" stroke="#005393" stroke-width="1" stroke-linejoin="round"/>
<polygon points="628.3,583.3 637.0,587.3 641.0,582.4 632.3,578.4" fill="#000" stroke="#0007ba" stroke-width="1" stroke-linejoin="round"/>
<polygon points="645.2,577.2 653.7,580.9 661.9,570.8 653.4,567.2" fill="#000" stroke="#002faa" stroke-width="1" stroke-linejoin="round"/>
<polygon points="641.0,582.4 649.4,586.2 653.7,580.9 645.2,577.2" fill="#000" stroke="#0017b4" stroke-width="1" stroke-linejoin="round"/>
<polygon points="637.0,587.3 645.4,591.3 649.4,586.2 641.0,582.4" fill="#000" stroke="#0007ba" stroke-width="1" stroke-linejoin="round"/>
<line x1="558.4" y1="550.3" x2="645.4" y2="591.3" stroke="#00c000" stroke-width="1.1"/>
<line x1="645.4" y1="591.3" x2="752.3" y2="555.3" stroke="#00e400" stroke-width="1.8"/>
<text transform="matrix(1 0.1122 0 1.0648 759.7 415.7)" x="0" y="0" font-size="12" fill="#fff" textLength="38.3" lengthAdjust="spacingAndGlyphs" stroke="#fff" stroke-width="0.3">2778.00</text>
<text transform="matrix(1 0.1548 0 1.0301 758.3 450.8)" x="0" y="0" font-size="12" fill="#fff" textLength="37.9" lengthAdjust="spacingAndGlyphs" stroke="#fff" stroke-width="0.3">2083.50</text>
<text transform="matrix(1 0.2016 0 0.9954 757.7 485)" x="0" y="0" font-size="12" fill="#fff" textLength="36.1" lengthAdjust="spacingAndGlyphs" stroke="#fff" stroke-width="0.3">1389.00</text>
<text transform="matrix(1 0.2309 0 0.9606 758.3 519.3)" x="0" y="0" font-size="12" fill="#fff" textLength="30.5" lengthAdjust="spacingAndGlyphs" stroke="#fff" stroke-width="0.3">694.50</text>
<text transform="matrix(1 0.2549 0 0.9954 762 553.5)" x="0" y="0" font-size="12" fill="#fff" textLength="19.9" lengthAdjust="spacingAndGlyphs" stroke="#fff" stroke-width="0.3">0.00</text>
<text transform="matrix(0.9600 -0.2800 -0.3635 0.7189 546 565.5)" x="0" y="3.60" font-size="10" fill="#fff" font-weight="normal" font-style="normal" text-anchor="middle" textLength="18" lengthAdjust="spacingAndGlyphs" stroke="#fff" stroke-width="0.45">608</text>
<text transform="matrix(0.9600 -0.2800 -0.3635 0.7189 563.5 574.5)" x="0" y="3.60" font-size="10" fill="#fff" font-weight="normal" font-style="normal" text-anchor="middle" textLength="25" lengthAdjust="spacingAndGlyphs" stroke="#fff" stroke-width="0.45">2080</text>
<text transform="matrix(0.9600 -0.2800 -0.3635 0.7189 584 585)" x="0" y="3.60" font-size="10" fill="#fff" font-weight="normal" font-style="normal" text-anchor="middle" textLength="26" lengthAdjust="spacingAndGlyphs" stroke="#fff" stroke-width="0.45">3552</text>
<text transform="matrix(0.9600 -0.2800 -0.3635 0.7189 605.4 596.3)" x="0" y="3.60" font-size="10" fill="#fff" font-weight="normal" font-style="normal" text-anchor="middle" textLength="26" lengthAdjust="spacingAndGlyphs" stroke="#fff" stroke-width="0.45">5024</text>
<text transform="matrix(0.9600 -0.2800 -0.3635 0.7189 628 608.7)" x="0" y="3.60" font-size="10" fill="#fff" font-weight="normal" font-style="normal" text-anchor="middle" textLength="26" lengthAdjust="spacingAndGlyphs" stroke="#fff" stroke-width="0.45">6496</text>
<text transform="matrix(0.9404 0.3401 -0.2300 0.7284 660 609.5)" x="0" y="3.60" font-size="10" fill="#fff" font-weight="normal" font-style="normal" text-anchor="middle" textLength="8" lengthAdjust="spacingAndGlyphs" stroke="#fff" stroke-width="0.45">0</text>
<text transform="matrix(0.9404 0.3401 -0.2300 0.7284 690 598.7)" x="0" y="3.60" font-size="10" fill="#fff" font-weight="normal" font-style="normal" text-anchor="middle" textLength="17" lengthAdjust="spacingAndGlyphs" stroke="#fff" stroke-width="0.45">136</text>
<text transform="matrix(0.9404 0.3401 -0.2300 0.7284 716.6 588.2)" x="0" y="3.60" font-size="10" fill="#fff" font-weight="normal" font-style="normal" text-anchor="middle" textLength="19" lengthAdjust="spacingAndGlyphs" stroke="#fff" stroke-width="0.45">277</text>
<text transform="matrix(0.9404 0.3401 -0.2300 0.7284 742 579.4)" x="0" y="3.60" font-size="10" fill="#fff" font-weight="normal" font-style="normal" text-anchor="middle" textLength="19" lengthAdjust="spacingAndGlyphs" stroke="#fff" stroke-width="0.45">415</text>
<text transform="matrix(0.9404 0.3401 -0.2300 0.7284 764.2 571.2)" x="0" y="3.60" font-size="10" fill="#fff" font-weight="normal" font-style="normal" text-anchor="middle" textLength="19" lengthAdjust="spacingAndGlyphs" stroke="#fff" stroke-width="0.45">553</text>
<text transform="matrix(0.8924 0.4512 -0.6464 0.5689 540.5 587.5)" x="0" y="3.60" font-size="10" fill="#ffff00" font-weight="normal" font-style="normal" text-anchor="middle" textLength="86" lengthAdjust="spacingAndGlyphs" stroke="#ffff00" stroke-width="0.45">Engine Speed (RPM)</text>
<text transform="matrix(0.9440 -0.3300 0.2677 0.8476 752.5 596)" x="0" y="3.60" font-size="10" fill="#ffff00" font-weight="normal" font-style="normal" text-anchor="middle" textLength="111" lengthAdjust="spacingAndGlyphs" stroke="#ffff00" stroke-width="0.45">Requested Torque (ft-lb)</text>
<text transform="translate(823.9 360.3) rotate(93.8)" x="0" y="0" font-size="14" font-weight="normal" font-style="italic" fill="#f4f400" stroke="#f4f400" stroke-width="0.35" textLength="271" lengthAdjust="spacingAndGlyphs">Mass Airflow Per Stroke (mg/stk) - Read-only</text>
</svg>
</div>
</body></html>
